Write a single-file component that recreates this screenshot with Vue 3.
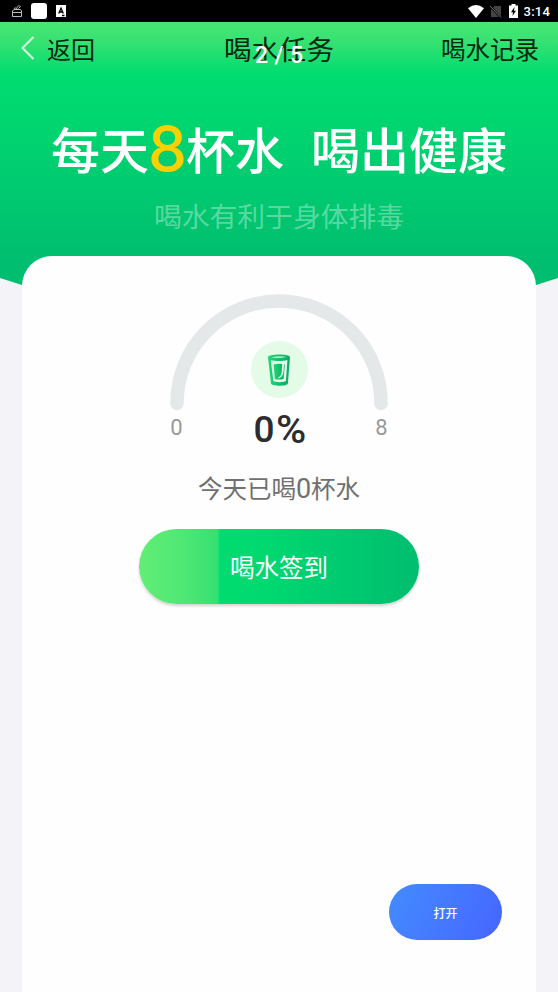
<script setup>
import { computed, ref } from 'vue'

const goal = 8
const cups = ref(0)
const percent = computed(() => Math.round((cups.value / goal) * 100))
</script>

<template>
  <div class="screen">
    <header class="status">
      <svg class="bag" viewBox="0 0 12 14"><path d="M1.500 7 3 5.500h6.500L10.500 7v5.500h-9zM3 5.500c-.5-1.500 1.500-2 3-1 0-2.500 2.500-3.500 3.500-2L7.500 4.500M1.500 8.500h8.500" /></svg>
      <span class="app-tile"></span>
      <svg class="lang" viewBox="0 0 10 12"><path fill="#fff" d="M0 0h10v12H0z" /><path fill="none" stroke="#000" stroke-width="1.3" d="M2.7 8.6 5 3.2l2.3 5.4M3.5 7h3M6 10.500h2.500" /></svg>
      <span class="spacer"></span>
      <svg class="wifi" viewBox="0 0 16 13"><path fill="#fff" d="M0 3.2Q8-3 16 3.2L8 13z" /></svg>
      <svg class="sim" viewBox="0 0 12 13"><path fill="#444" d="M4.5 1H11v11H1V4.5z" /><path stroke="#000" stroke-width="2" d="m1 2 10 11" /><path stroke="#777" d="m0 1 11 11.5" /></svg>
      <svg class="battery" viewBox="0 0 9 14"><path fill="#fff" d="M2.5 0h4v1.5H9V14H0V1.5h2.5z" /><path fill="#000" d="M5.5 3 2 8.3h2L3.5 12 7 6.7H5z" /></svg>
      <span class="clock">3:14</span>
    </header>

    <section class="hero">
      <nav class="nav">
        <svg class="back" viewBox="0 0 14 24"><path d="M12.5 1 1.5 12l11 11" /></svg>
        <span class="back-label">返回</span>
        <span class="nav-title">喝水任务<span class="toast">2 / 5</span></span>
        <span class="record">喝水记录</span>
      </nav>
      <h1 class="headline"><span>每天</span><b>8</b><span>杯水</span><span class="second">喝出健康</span></h1>
      <p class="subtitle">喝水有利于身体排毒</p>
    </section>

    <main class="card">
      <div class="gauge">
        <svg class="arc" viewBox="0 0 218 117"><path d="M7 109.5V109a102 102 0 0 1 204 0v.5" /></svg>
        <div class="badge">
          <svg viewBox="0 0 24 34">
            <defs>
              <linearGradient id="glass" x1="0" y1="0" x2="1" y2="0">
                <stop offset="0" stop-color="#1fd873" /><stop offset="1" stop-color="#0aa968" />
              </linearGradient>
            </defs>
            <path fill="url(#glass)" fill-rule="evenodd" d="M1 4.2C1 .8 22.8.5 23 4.2L20.9 30.5c-.4 3-16.2 3-16.9 0zM3.8 7.2 6.3 28c2 1.5 10.6 1.5 12.6 0L20.4 7c-4 1.2-12.4 1.3-16.6.2zM4.5 4.3c3.5.7 11 .7 15-.2-4-.9-11.5-.8-15 .2z" />
            <path fill="url(#glass)" d="M6.6 11.5c2.5-.8 6.5-1 8.6-.5l-.5 8c-.3 3-1.5 4.5-3.7 5.7l.3.7c3.2-.7 4.9-3.2 5.2-6.700l.5-7.200h.8l-1.200 14.500c-2.500.7-6 .8-8.700.2z" />
          </svg>
        </div>
      </div>
      <div class="scale"><span>0</span><strong>{{ percent }}<em>%</em></strong><span>{{ goal }}</span></div>
      <p class="today">今天已喝<i>{{ cups }}</i>杯水</p>
      <button class="checkin">喝水签到</button>
      <button class="open">打开</button>
    </main>
  </div>
</template>

<style>
body { margin: 0; background: #f4f3f7; }
</style>

<style scoped>
.screen {
  width: 558px; height: 992px; overflow: hidden; display: flex; flex-direction: column;
  background: #f4f3f7; font-family: Roboto, "Noto Sans CJK SC", sans-serif;
}
.status { height: 22px; flex: none; background: #000; display: flex; align-items: center; padding: 0 8px 0 11px; box-sizing: border-box; }
.bag { width: 12px; height: 14px; fill: none; stroke: #bbb; stroke-width: 1; }
.app-tile { width: 16px; height: 16px; border-radius: 3px; background: #fff; margin-left: 8px; }
.lang { width: 10px; height: 12px; margin-left: 9px; }
.spacer { flex: 1; }
.wifi { width: 16px; height: 13px; }
.sim { width: 12px; height: 13px; margin-left: 6px; }
.battery { width: 9px; height: 14px; margin-left: 7px; }
.clock { color: #fff; font-size: 13px; font-weight: 500; letter-spacing: .2px; margin-left: 6px; line-height: 23px; padding-top: 1px; }
.hero {
  height: 278px; flex: none; box-sizing: border-box;
  background: linear-gradient(#49e674 0, #35e272 20px, #00dc70 52px, #00d770 92px, #00be70 240px);
  clip-path: polygon(0 0, 100% 0, 100% 256px, 536px 263px, 22px 263px, 0 256px);
}
.nav { height: 56px; display: grid; grid-template-columns: 26px 100px 1fr 145px; align-items: center; padding: 0 19px 0 21px; color: #05290f; }
.back { width: 14px; height: 24px; fill: none; stroke: #d9ffe4; stroke-width: 2; margin-top: -5px; }
.back-label, .record { font-size: 24px; line-height: 56px; padding-top: 1px; }
.record { font-size: 24.5px; text-align: right; }
.nav-title { font-size: 27.5px; line-height: 56px; position: relative; white-space: nowrap; justify-self: start; margin-left: 77px; padding-top: 1px; }
.toast { position: absolute; left: 31px; top: 6px; color: #fff; font-size: 23px; line-height: 56px; letter-spacing: .4px; font-weight: 500; }
.headline {
  margin: 35px 0 0; height: 80px; display: flex; justify-content: center; align-items: center;
  color: #fff; font-size: 49px; font-weight: 500; line-height: 80px; white-space: nowrap;
}
.headline b { color: #fad000; font-family: Inter, sans-serif; font-size: 62px; font-weight: 500; width: 37px; display: flex; justify-content: center; line-height: 80px; margin-top: -8px; }
.headline .second { margin-left: 27px; }
.subtitle { margin: 4px 0 0; text-align: center; color: rgba(255, 255, 255, .36); font-size: 27.8px; line-height: 42px; font-weight: 400; }
.card {
  position: relative; flex: none; width: 514px; height: 736px; margin: -44px 0 0 22px; background: #fefefe;
  border-radius: 30px 30px 0 0; display: flex; flex-direction: column; align-items: center; padding-top: 38px; box-sizing: border-box;
}
.gauge { width: 218px; height: 117px; display: grid; justify-items: center; }
.arc { grid-area: 1 / 1; width: 218px; height: 117px; fill: none; stroke: #e4e8e9; stroke-width: 13.5; stroke-linecap: round; }
.badge { grid-area: 1 / 1; width: 57px; height: 57px; margin-top: 47px; border-radius: 50%; background: #e4fbe7; display: flex; align-items: center; justify-content: center; }
.badge svg { width: 24px; height: 34px; }
.scale { width: 218px; display: grid; grid-template-columns: 13px 1fr 13px; align-items: center; justify-items: center; height: 38px; color: #999; font-size: 22px; }
.scale span { line-height: 32px; margin-top: -4px; }
.scale strong { color: #2c2c31; font-size: 37px; line-height: 38px; font-weight: 500; display: flex; }
.scale em { font-style: normal; font-size: 38px; transform: scaleX(1.08); margin-left: 2px; }
.today { margin: 23px 0 0; font-size: 24.5px; line-height: 36px; color: #707070; font-weight: 400; }
.today i { font-style: normal; font-size: 27px; line-height: 30px; }
button { border: 0; padding: 0; color: #fff; font-family: inherit; }
.checkin {
  width: 280px; height: 75px; margin-top: 21px; border-radius: 38px; font-size: 24.5px;
  background: linear-gradient(90deg, #62ee76 0, #4ce675 18%, #35e072 28%, #00dc71 29%, #00d970 45%, #00cd70 66%, #00be70 100%);
  box-shadow: 0 2px 3px rgba(0, 0, 0, .18);
}
.open { position: absolute; right: 34px; bottom: 52px; width: 113px; height: 56px; border-radius: 28px; font-size: 12px; font-weight: 500; background: linear-gradient(115deg, #438cff, #4665ff); }
</style>
